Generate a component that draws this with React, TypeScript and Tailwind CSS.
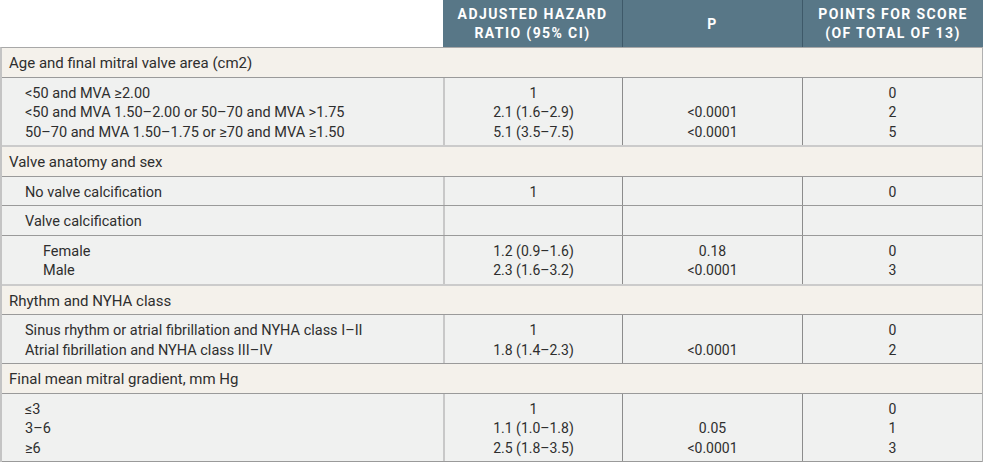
type Line = [string, string, string, string];

type Row =
  | { kind: 'section'; label: string }
  | { kind: 'data'; indent: 1 | 2; lines: Line[]; soft?: boolean };

// table body, top to bottom
const rows: Row[] = [
  { kind: 'section', label: 'Age and final mitral valve area (cm2)' },
  {
    kind: 'data',
    indent: 1,
    soft: true,
    lines: [
      ['<50 and MVA ≥2.00', '1', '', '0'],
      ['<50 and MVA 1.50–2.00 or 50–70 and MVA >1.75', '2.1 (1.6–2.9)', '<0.0001', '2'],
      ['50–70 and MVA 1.50–1.75 or ≥70 and MVA ≥1.50', '5.1 (3.5–7.5)', '<0.0001', '5'],
    ],
  },
  { kind: 'section', label: 'Valve anatomy and sex' },
  { kind: 'data', indent: 1, lines: [['No valve calcification', '1', '', '0']] },
  { kind: 'data', indent: 1, lines: [['Valve calcification', '', '', '']] },
  {
    kind: 'data',
    indent: 2,
    soft: true,
    lines: [
      ['Female', '1.2 (0.9–1.6)', '0.18', '0'],
      ['Male', '2.3 (1.6–3.2)', '<0.0001', '3'],
    ],
  },
  { kind: 'section', label: 'Rhythm and NYHA class' },
  {
    kind: 'data',
    indent: 1,
    lines: [
      ['Sinus rhythm or atrial fibrillation and NYHA class I–II', '1', '', '0'],
      ['Atrial fibrillation and NYHA class III–IV', '1.8 (1.4–2.3)', '<0.0001', '2'],
    ],
  },
  { kind: 'section', label: 'Final mean mitral gradient, mm Hg' },
  {
    kind: 'data',
    indent: 1,
    lines: [
      ['≤3', '1', '', '0'],
      ['3–6', '1.1 (1.0–1.8)', '0.05', '1'],
      ['≥6', '2.5 (1.8–3.5)', '<0.0001', '3'],
    ],
  },
];

function Cell({ lines, col, className }: { lines: Line[]; col: number; className: string }) {
  return (
    <div className={className}>
      {lines.map((l, i) => (
        <div key={i} className="h-[19.5px] whitespace-nowrap">
          {l[col] || '\u00a0'}
        </div>
      ))}
    </div>
  );
}

function DataRow({ row }: { row: Extract<Row, { kind: 'data' }> }) {
  const border = row.soft ? 'border-b-2 border-[#cbcbcb]' : 'border-b border-[#9a9a9a]';
  return (
    <div className={`grid grid-cols-[441px_179px_180px_1fr] bg-[#f0f1f0] ${border}`}>
      <Cell
        lines={row.lines}
        col={0}
        className={`pt-[6px] pb-[3px] text-[14.5px] ${row.indent === 2 ? 'pl-[41px]' : 'pl-[23px]'}`}
      />
      <Cell lines={row.lines} col={1} className="pt-[6px] pb-[3px] text-center border-l-2 border-[#c8c8c8]" />
      <Cell lines={row.lines} col={2} className="pt-[6px] pb-[3px] text-center border-l border-[#8c8c8c]" />
      <Cell lines={row.lines} col={3} className="pt-[6px] pb-[3px] text-center border-l border-[#8c8c8c]" />
    </div>
  );
}

export default function App() {
  return (
    <div className="w-[983px] bg-white font-[Roboto,'Noto_Sans',sans-serif] text-[14px] leading-[19.5px] text-[#2e2e2e]">
      {/* Column headings */}
      <div className="grid grid-cols-[443px_179px_180px_181px] h-[47px]">
        <div />
        {['Adjusted hazard ratio (95% CI)', 'P', 'Points for score (of total of 13)'].map((h, i) => (
          <div
            key={h}
            className={`flex items-center justify-center bg-[#587787] px-2 pt-[1px] text-center text-[14px] leading-[19px] font-bold uppercase tracking-[0.1em] text-white ${
              i > 0 ? 'border-l border-[#3e5969]' : ''
            }`}
          >
            {h}
          </div>
        ))}
      </div>

      {/* Body */}
      <div className="border-t border-[#a8a8a8] border-l-2 border-l-[#c4c4c4] border-r border-r-[#b0b0b0] border-b border-b-[#8c8c8c]">
        {rows.map((row, i) =>
          row.kind === 'section' ? (
            <div key={i} className="bg-[#f4f1eb] pl-[7px] pt-[6px] pb-[3px] border-b border-[#9a9a9a] text-[15px]">
              {row.label}
            </div>
          ) : (
            <DataRow key={i} row={row} />
          )
        )}
      </div>
    </div>
  );
}
